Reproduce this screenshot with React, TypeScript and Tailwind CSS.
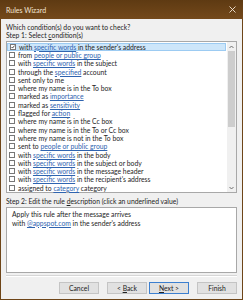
import React from "react";

type Part = { t: string; link?: boolean };
const rows: Part[][] = [
  [{ t: "with " }, { t: "specific words", link: true }, { t: " in the sender's address" }],
  [{ t: "from " }, { t: "people or public group", link: true }],
  [{ t: "with " }, { t: "specific words", link: true }, { t: " in the subject" }],
  [{ t: "through the " }, { t: "specified", link: true }, { t: " account" }],
  [{ t: "sent only to me" }],
  [{ t: "where my name is in the To box" }],
  [{ t: "marked as " }, { t: "importance", link: true }],
  [{ t: "marked as " }, { t: "sensitivity", link: true }],
  [{ t: "flagged for " }, { t: "action", link: true }],
  [{ t: "where my name is in the Cc box" }],
  [{ t: "where my name is in the To or Cc box" }],
  [{ t: "where my name is not in the To box" }],
  [{ t: "sent to " }, { t: "people or public group", link: true }],
  [{ t: "with " }, { t: "specific words", link: true }, { t: " in the body" }],
  [{ t: "with " }, { t: "specific words", link: true }, { t: " in the subject or body" }],
  [{ t: "with " }, { t: "specific words", link: true }, { t: " in the message header" }],
  [{ t: "with " }, { t: "specific words", link: true }, { t: " in the recipient's address" }],
  [{ t: "assigned to " }, { t: "category", link: true }, { t: " category" }],
];

function Text({ parts }: { parts: Part[] }) {
  return (
    <span className="whitespace-pre">
      {parts.map((p, i) =>
        p.link ? (
          <span key={i} className="text-[#2f64b0] underline decoration-[0.5px] underline-offset-[1px]">
            {p.t}
          </span>
        ) : (
          <span key={i}>{p.t}</span>
        )
      )}
    </span>
  );
}

function Btn({ label, primary, className }: { label: React.ReactNode; primary?: boolean; className?: string }) {
  return (
    <div
      className={
        "w-[40px] h-[12px] flex items-center justify-center bg-[#e1e1e1] text-[#222] " +
        (primary ? "border-[1.5px] border-[#3c7fcf] " : "border border-[#c4c4c4] ") +
        (className ?? "")
      }
    >
      {label}
    </div>
  );
}

export default function App() {
  return (
    <div
      className="w-[243px] h-[300px] bg-[#6e4518] flex flex-col text-[6.8px] leading-[8px] text-[#1e1e1e]"
      style={{ fontFamily: 'Lato, "Open Sans", sans-serif' }}
    >
      <div className="h-[19px] flex items-center justify-between px-[6px] text-[#f3e6d6] bg-gradient-to-b from-[#5e3a12] to-[#74491b]">
        <span className="text-[7px]">Rules Wizard</span>
        <svg width="7" height="7" viewBox="0 0 7 7" className="mr-[1px]">
          <path d="M0.5 0.5 L6.5 6.5 M6.5 0.5 L0.5 6.5" stroke="#f3e6d6" strokeWidth="0.9" />
        </svg>
      </div>
      <div className="flex-1 mx-[1px] mb-[1px] bg-[#f0f0f0] flex flex-col px-[5px] pt-[4px]">
        <div className="h-[8px]">Which condition(s) do you want to check?</div>
        <div className="h-[8px]">
          Step 1: Select <span className="underline decoration-[0.5px]">c</span>ondition(s)
        </div>
        <div className="mt-[2px] h-[152px] border border-[#a8a8a8] bg-white flex">
          <div className="flex-1 flex flex-col pt-[0.5px]">
            {rows.map((r, i) => (
              <div
                key={i}
                className={
                  "h-[8.3px] flex items-center pl-[2px] " +
                  (i === 0 ? "bg-[#cde6fa] border border-[#9ccbf2] mr-[1px]" : "")
                }
              >
                <div className="w-[6px] h-[6px] border border-[#777] bg-white mr-[3px] flex items-center justify-center shrink-0">
                  {i === 0 && (
                    <svg width="6" height="6" viewBox="0 0 6 6">
                      <path d="M0.8 3 L2.3 4.6 L5.3 0.9" stroke="#111" strokeWidth="1.1" fill="none" />
                    </svg>
                  )}
                </div>
                <Text parts={r} />
              </div>
            ))}
          </div>
          <div className="w-[9px] bg-[#f0f0f0] flex flex-col items-center">
            <div className="h-[9px] flex items-center justify-center">
              <svg width="5" height="4" viewBox="0 0 5 4">
                <path d="M0.5 3 L2.5 1 L4.5 3" stroke="#606060" strokeWidth="0.9" fill="none" />
              </svg>
            </div>
            <div className="w-[7px] h-[76px] bg-[#cdcdcd]" />
            <div className="flex-1" />
            <div className="h-[9px] flex items-center justify-center">
              <svg width="5" height="4" viewBox="0 0 5 4">
                <path d="M0.5 1 L2.5 3 L4.5 1" stroke="#606060" strokeWidth="0.9" fill="none" />
              </svg>
            </div>
          </div>
        </div>
        <div className="mt-[4px] h-[8px]">
          Step 2: Edit the rule <span className="underline decoration-[0.5px]">d</span>escription (click an underlined value)
        </div>
        <div className="mt-[2px] h-[66px] border border-[#a8a8a8] bg-white px-[5px] pt-[1px]">
          <div className="h-[9px] flex items-center">Apply this rule after the message arrives</div>
          <div className="h-[9px] flex items-center">
            <Text parts={[{ t: "with " }, { t: "@appspot.com", link: true }, { t: " in the sender's address" }]} />
          </div>
        </div>
        <div className="mt-[2px] h-[2px] border-t border-[#d6d6d6] border-b border-b-white" />
        <div className="mt-[5px] flex justify-end">
          <Btn label="Cancel" />
          <Btn className="ml-[8px]" label={<span>&lt; <span className="underline decoration-[0.5px]">B</span>ack</span>} />
          <Btn className="ml-[2px]" primary label={<span><span className="underline decoration-[0.5px]">N</span>ext &gt;</span>} />
          <Btn className="ml-[8px]" label="Finish" />
        </div>
      </div>
    </div>
  );
}
